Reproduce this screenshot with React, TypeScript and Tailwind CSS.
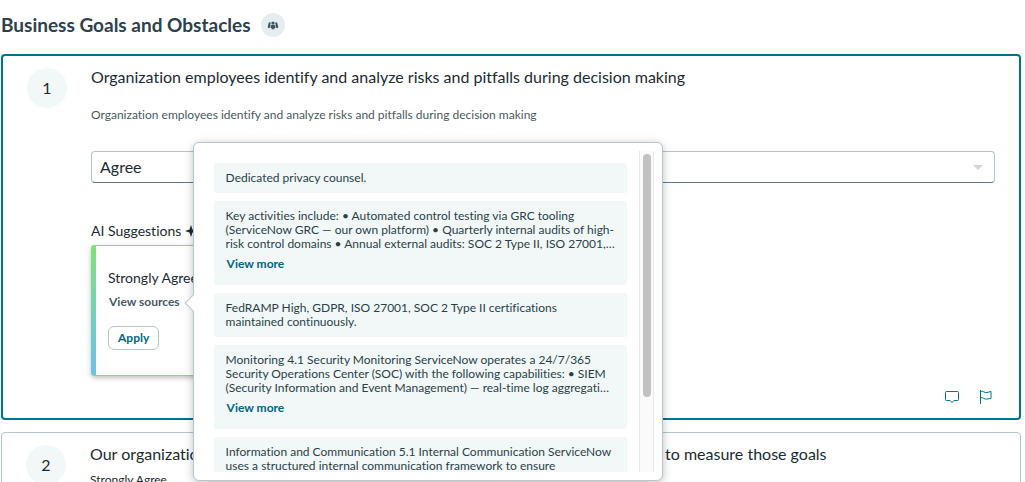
import React from "react";

type Source = { text: string; more?: boolean };

const sources: Source[] = [
  { text: "Dedicated privacy counsel." },
  {
    text: "Key activities include: • Automated control testing via GRC tooling (ServiceNow GRC — our own platform) • Quarterly internal audits of high-risk control domains • Annual external audits: SOC 2 Type II, ISO 27001,…",
    more: true,
  },
  { text: "FedRAMP High, GDPR, ISO 27001, SOC 2 Type II certifications maintained continuously." },
  {
    text: "Monitoring 4.1 Security Monitoring ServiceNow operates a 24/7/365 Security Operations Center (SOC) with the following capabilities: • SIEM (Security Information and Event Management) — real-time log aggregati…",
    more: true,
  },
  {
    text: "Information and Communication 5.1 Internal Communication ServiceNow uses a structured internal communication framework to ensure",
  },
];

function GroupIcon() {
  return (
    <svg width="12" height="9" viewBox="0 0 14 10" fill="#3f5560" aria-hidden="true">
      <circle cx="7" cy="2.200" r="1.900" />
      <path d="M4.600 4.500h4.800l.6 3-1.200.5-.3 1.500h-3L5.200 8 4 7.500z" />
      <path d="M3.200 1.200c1 0 1.300.8 1 1.800L3.300 7.500 2 8.200.8 7 1.600 3.500c.2-1.300.6-2.300 1.600-2.300zM10.800 1.200c-1 0-1.300.8-1 1.800l.9 4.500 1.300.7L13.200 7l-.8-3.500c-.2-1.300-.6-2.300-1.600-2.300z" />
    </svg>
  );
}

function CommentIcon() {
  return (
    <svg width="16" height="14" viewBox="0 0 16 14" fill="none" stroke="#00718f" strokeLinejoin="round" aria-hidden="true">
      <path d="M2.500 1.500h11a1 1 0 0 1 1 1v7a1 1 0 0 1-1 1H10l-2 2-2-2H2.500a1 1 0 0 1-1-1v-7a1 1 0 0 1 1-1z" />
    </svg>
  );
}

function FlagIcon() {
  return (
    <svg width="14" height="16" viewBox="0 0 14 16" fill="none" stroke="#00718f" aria-hidden="true">
      <path d="M1.500 1v14M1.500 2.500C4 1 5.500 4.500 8 3.500l4-1v7l-4 .5c-2.500 1-4-2.500-6.500-1" />
    </svg>
  );
}

function SparkleIcon() {
  return (
    <svg width="12" height="12" viewBox="0 0 12 12" fill="#1b2b33" aria-hidden="true">
      <path d="M6 0l1.500 4.500L12 6 7.500 7.500 6 12 4.500 7.500 0 6l4.500-1.500z" />
    </svg>
  );
}

function NumberBadge({ value }: { value: number }) {
  return (
    <span className="flex size-10 shrink-0 items-center justify-center rounded-full bg-[#f2f8f8] text-base">
      {value}
    </span>
  );
}

function SourcesPopover() {
  return (
    <div
      role="dialog"
      aria-label="Sources"
      className="absolute -top-[150px] left-full z-10 ml-3 w-[470px] rounded-md border border-[#b4c5cc] bg-white py-2 pr-2 pl-5 shadow-[0_2px_10px_rgba(0,0,0,0.25)]"
    >
      <span className="absolute top-[154px] -left-[7px] size-3 rotate-45 border-b border-l border-[#b4c5cc] bg-white" />
      <div className="flex h-[321px] gap-3">
        <ul className="flex min-w-0 flex-1 flex-col gap-2 overflow-y-auto pt-3 [scrollbar-width:none]">
          {sources.map((source) => (
            <li
              key={source.text}
              className="shrink-0 rounded-xs bg-[#f2f8f8] py-2 pr-[10px] pl-3 text-xs/[14px] text-[#2b3f48]"
            >
              <p>{source.text}</p>
              {source.more && (
                <button type="button" className="my-1 block px-px text-xs/[18px] font-bold text-[#00667f]">
                  View more
                </button>
              )}
            </li>
          ))}
        </ul>
        <div className="w-[15px] border-x border-[#e8e8e8] bg-[#fafafa] px-[3px] pt-[3px]" aria-hidden="true">
          <div className="h-[243px] w-2 rounded-full bg-[#c1c1c1]" />
        </div>
      </div>
    </div>
  );
}

export default function App() {
  return (
    <main className="bg-white pr-1 pl-px font-['Lato',sans-serif] text-[#1b2b33] [font-variant-ligatures:none]">
      <header className="flex h-[54px] items-center gap-[10px] pb-1">
        <h1 className="text-[19px] font-bold text-[#2c414b]">Business Goals and Obstacles</h1>
        <span className="flex size-6 items-center justify-center rounded-full bg-[#e6edf0]">
          <GroupIcon />
        </span>
      </header>

      <section className="flex gap-6 rounded-sm border-2 border-[#00718f] px-6 py-3">
        <NumberBadge value={1} />
        <div className="min-w-0 flex-1">
          <h2 className="text-base/[18px]">Organization employees identify and analyze risks and pitfalls during decision making</h2>
          <p className="mt-[21px] text-xs/4 text-[#465a63]">
            Organization employees identify and analyze risks and pitfalls during decision making
          </p>
          <div className="relative mt-7">
            <select
              aria-label="Response"
              defaultValue="Agree"
              className="block h-8 w-full appearance-none rounded-sm border border-[#b4c5cc] border-b-[#5d7a86] bg-white px-2 text-base"
            >
              <option>Strongly Agree</option>
              <option>Agree</option>
              <option>Disagree</option>
            </select>
            <svg width="10" height="5" viewBox="0 0 10 5" fill="#d2d8da" className="pointer-events-none absolute top-[14px] right-3" aria-hidden="true">
              <path d="M0 0h10L5 5z" />
            </svg>
          </div>
          <h3 className="mt-[38px] flex items-center gap-1 text-sm/5">
            AI Suggestions <SparkleIcon />
          </h3>
          <div className="mt-1 w-72 rounded-sm bg-linear-to-b from-[#7de36d] to-[#69c0ee] shadow-[0_2px_5px_rgba(0,0,0,0.25)]">
            <div className="rounded-sm border-y border-r border-[#7de36d] pl-[5px]">
              <div className="bg-white pt-[22px] pb-[25px] pl-3">
                <p className="text-sm/5">Strongly Agree</p>
                <div className="relative mt-1 w-fit">
                  <button type="button" className="block px-px text-xs/5 font-bold text-[#465a63]">
                    View sources
                  </button>
                  <SourcesPopover />
                </div>
                <button
                  type="button"
                  className="mt-[14px] block h-6 rounded-md border border-[#b4c5cc] px-[9px] text-xs font-bold text-[#00667f]"
                >
                  Apply
                </button>
              </div>
            </div>
          </div>
          <div className="mt-3 flex h-[18px] items-center justify-end gap-[19px] pr-0.5">
            <button type="button" aria-label="Comment"><CommentIcon /></button>
            <button type="button" aria-label="Flag"><FlagIcon /></button>
          </div>
        </div>
      </section>

      <section className="mt-3 flex gap-6 rounded-sm border border-[#b4c5cc] px-6 py-3">
        <NumberBadge value={2} />
        <div className="min-w-0 flex-1">
          <h2 className="text-base/[18px]">
            Our organization sets clear goals and objectives and uses formally defined metrics to measure those goals
          </h2>
          <p className="mt-2 text-xs/[18px]">Strongly Agree</p>
        </div>
      </section>
    </main>
  );
}
